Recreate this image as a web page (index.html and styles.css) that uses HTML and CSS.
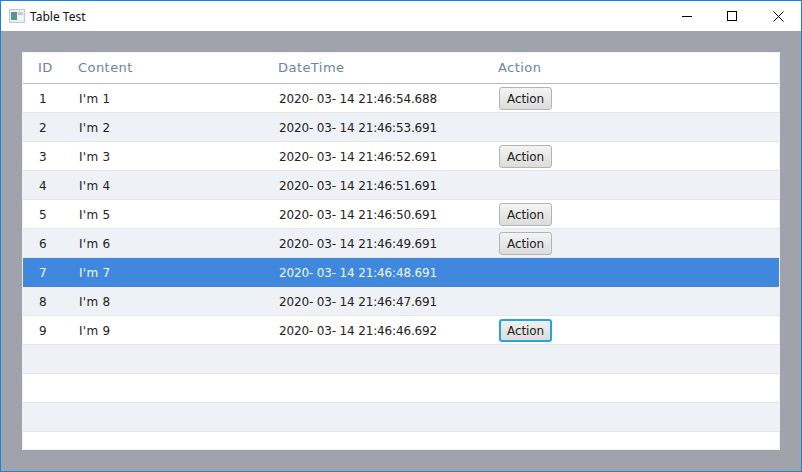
FILE: index.html
```html
<!DOCTYPE html>
<html lang="en">
<head>
<meta charset="utf-8">
<title>Table Test</title>
<link rel="stylesheet" href="styles.css">
</head>
<body>
<div class="window">
  <header class="titlebar">
    <svg class="app-icon" width="16" height="14" viewBox="0 0 16 14">
      <defs><linearGradient id="pane" x1="0" y1="0" x2="0" y2="1"><stop offset="0" stop-color="#6d86a8"/><stop offset="1" stop-color="#4f9d86"/></linearGradient></defs>
      <rect x="0.5" y="0.5" width="15" height="13" fill="#eceeee" stroke="#c4c8c8"/>
      <rect x="2" y="3" width="6" height="8" fill="url(#pane)"/>
      <rect x="9" y="3" width="5" height="3" fill="#b9d0cb"/>
      <rect x="9" y="7" width="5" height="4" fill="#f4f6f6"/>
    </svg>
    <span class="title">Table Test</span>
    <div class="controls">
      <button class="ctl"><svg width="11" height="11" viewBox="0 0 11 11"><path d="M0 5.5H10" stroke="#000" fill="none"/></svg></button>
      <button class="ctl"><svg width="11" height="11" viewBox="0 0 11 11"><rect x="0.5" y="0.5" width="9" height="9" stroke="#000" fill="none"/></svg></button>
      <button class="ctl"><svg width="11" height="11" viewBox="0 0 11 11"><path d="M0.5 0.5L10.5 10.5M10.5 0.5L0.5 10.5" stroke="#000" fill="none"/></svg></button>
    </div>
  </header>
  <main class="content">
    <div class="table">
      <div class="row head"><span>ID</span><span>Content</span><span>DateTime</span><span>Action</span></div>
      <div class="row"><span>1</span><span>I'm 1</span><span>2020- 03- 14 21:46:54.688</span><span><button class="action">Action</button></span></div>
      <div class="row alt"><span>2</span><span>I'm 2</span><span>2020- 03- 14 21:46:53.691</span><span></span></div>
      <div class="row"><span>3</span><span>I'm 3</span><span>2020- 03- 14 21:46:52.691</span><span><button class="action">Action</button></span></div>
      <div class="row alt"><span>4</span><span>I'm 4</span><span>2020- 03- 14 21:46:51.691</span><span></span></div>
      <div class="row"><span>5</span><span>I'm 5</span><span>2020- 03- 14 21:46:50.691</span><span><button class="action">Action</button></span></div>
      <div class="row alt"><span>6</span><span>I'm 6</span><span>2020- 03- 14 21:46:49.691</span><span><button class="action">Action</button></span></div>
      <div class="row selected"><span>7</span><span>I'm 7</span><span>2020- 03- 14 21:46:48.691</span><span></span></div>
      <div class="row alt"><span>8</span><span>I'm 8</span><span>2020- 03- 14 21:46:47.691</span><span></span></div>
      <div class="row"><span>9</span><span>I'm 9</span><span>2020- 03- 14 21:46:46.692</span><span><button class="action focused">Action</button></span></div>
      <div class="row alt"></div>
      <div class="row"></div>
      <div class="row alt"></div>
      <div class="row last"></div>
    </div>
  </main>
</div>
</body>
</html>
```
FILE: styles.css
```css
* { box-sizing: border-box; }
html, body { margin: 0; padding: 0; }
body { width: 802px; height: 472px; overflow: hidden; }
.window {
  width: 802px; height: 472px;
  border: 1px solid #1883d7;
  display: flex; flex-direction: column;
  background: #a0a3ab;
}
.titlebar {
  height: 30px; background: #fff;
  display: flex; align-items: center;
  padding-left: 8px;
  flex: none;
}
.app-icon { flex: none; }
.title {
  margin-left: 5px;
  font: 12px "Noto Sans", sans-serif;
  color: #111;
}
.controls { margin-left: auto; display: flex; align-self: stretch; }
.ctl {
  width: 45.5px; border: 0; padding: 0; background: none;
  display: flex; align-items: center; justify-content: center;
}
.content { flex: 1; padding: 21px; min-height: 0; }
.table {
  height: 398px; background: #fff; overflow: hidden;
  border: 1px solid #eef0f3;
  font: 12px "DejaVu Sans", sans-serif;
  color: #222;
}
.row {
  height: 29px;
  display: grid;
  grid-template-columns: 55px 200px 220px 1fr;
  align-items: center;
  border-bottom: 1px solid #e4e6ea;
  padding-top: 1px;
}
.row > span { padding-left: 1px; white-space: nowrap; letter-spacing: -0.15px; }
.row > span:first-child { padding-left: 16px; }
.row > span:nth-child(2) { letter-spacing: 0.3px; }
.row.alt { background: #eef1f6; }
.row.selected { background: #3f88de; color: #f2f8ff; border-bottom-color: #3f88de; }
.row.head {
  height: 31px;
  padding-top: 0;
  padding-bottom: 1px;
  color: #6b84a2;
  font-size: 13px;
  border-bottom: 1px solid #b6b8bc;
}
.row.head > span { padding-left: 0; letter-spacing: 0.45px; }
.row.head > span:first-child { padding-left: 15px; }
.row.last { border-bottom: 0; }
.action {
  display: block;
  width: 53px; height: 23px; padding: 0;
  font: 12px "DejaVu Sans", sans-serif;
  letter-spacing: -0.1px;
  color: #222;
  background: linear-gradient(#f4f4f4, #dcdcdc);
  border: 1px solid #b4b4b4;
  border-radius: 3px;
}
.action.focused {
  border: 2px solid #2aa3d8;
  background: linear-gradient(#efefef, #dcdcdc);
}
```
